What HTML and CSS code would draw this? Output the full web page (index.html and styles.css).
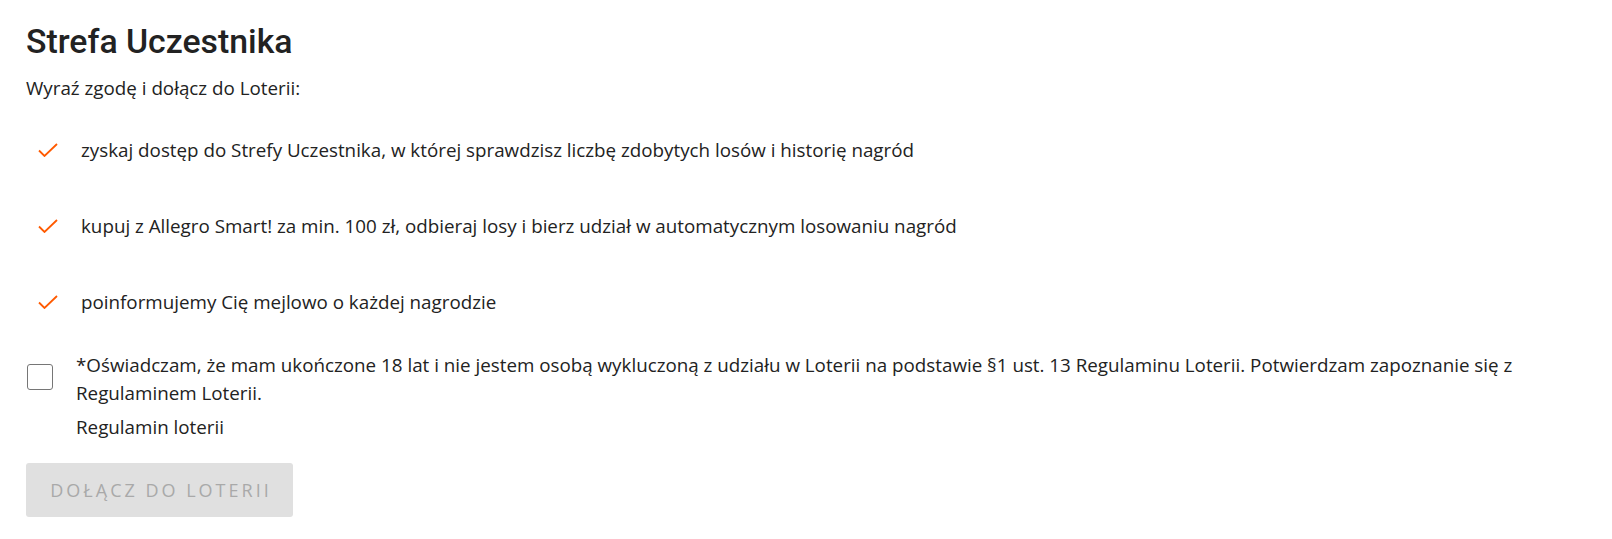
FILE: index.html
```html
<!DOCTYPE html>
<html lang="pl">
<head>
<meta charset="utf-8">
<title>Strefa Uczestnika</title>
<link rel="stylesheet" href="styles.css">
</head>
<body>
<main class="panel">
  <h1 class="title">Strefa Uczestnika</h1>
  <p class="intro">Wyraź zgodę i dołącz do Loterii:</p>
  <ul class="benefits">
    <li class="benefit">
      <svg class="check" width="20" height="14" viewBox="0 0 20 14"><path d="M1 7.5 L6.5 13 L19 1" fill="none" stroke="#ff5a00" stroke-width="1.8"/></svg>
      <span>zyskaj dostęp do Strefy Uczestnika, w której sprawdzisz liczbę zdobytych losów i historię nagród</span>
    </li>
    <li class="benefit">
      <svg class="check" width="20" height="14" viewBox="0 0 20 14"><path d="M1 7.5 L6.5 13 L19 1" fill="none" stroke="#ff5a00" stroke-width="1.8"/></svg>
      <span>kupuj z Allegro Smart! za min. 100 zł, odbieraj losy i bierz udział w automatycznym losowaniu nagród</span>
    </li>
    <li class="benefit">
      <svg class="check" width="20" height="14" viewBox="0 0 20 14"><path d="M1 7.5 L6.5 13 L19 1" fill="none" stroke="#ff5a00" stroke-width="1.8"/></svg>
      <span>poinformujemy Cię mejlowo o każdej nagrodzie</span>
    </li>
  </ul>
  <div class="consent">
    <span class="box"></span>
    <div class="consent-body">
      <p class="consent-text">*Oświadczam, że mam ukończone 18 lat i nie jestem osobą wykluczoną z udziału w Loterii na podstawie §1 ust. 13 Regulaminu Loterii. Potwierdzam zapoznanie się z Regulaminem Loterii.</p>
      <a class="rules" href="#">Regulamin loterii</a>
    </div>
  </div>
  <button class="join" disabled>DOŁĄCZ DO LOTERII</button>
</main>
</body>
</html>
```
FILE: styles.css
```css
html, body {
  margin: 0;
  padding: 0;
  background: #fff;
}
body {
  font-family: "Open Sans", "Liberation Sans", sans-serif;
  font-size: 18.8px;
  color: #222;
}
.panel {
  padding: 22px 26px 0 26px;
}
.title {
  margin: 0;
  font-family: Roboto, "Liberation Sans", sans-serif;
  font-weight: 500;
  font-size: 33.8px;
  line-height: 40px;
  color: #222;
}
.intro {
  margin: 13px 0 0 0;
  line-height: 26px;
}
.benefits {
  list-style: none;
  margin: 36px 0 0 0;
  padding: 0;
  display: flex;
  flex-direction: column;
  gap: 50px;
}
.benefit {
  display: flex;
  align-items: center;
  line-height: 26px;
}
.check {
  margin-left: 12px;
  margin-right: 23px;
  flex: none;
}
.consent {
  display: flex;
  align-items: flex-start;
  margin-top: 36px;
}
.box {
  flex: none;
  width: 24px;
  height: 24px;
  border: 1px solid #767676;
  border-radius: 3px;
  margin-top: 13px;
  margin-left: 1px;
  margin-right: 23px;
}
.consent-body {
  flex: 1;
}
.consent-text {
  margin: 0;
  line-height: 28px;
}
.rules {
  display: block;
  margin-top: 7px;
  line-height: 26px;
  color: #222;
  text-decoration: none;
}
.join {
  margin-top: 23px;
  width: 267px;
  height: 54px;
  border: none;
  border-radius: 3px;
  background: #e0e0e0;
  color: #a9a9a9;
  font-family: "Open Sans", "Liberation Sans", sans-serif;
  font-size: 18px;
  letter-spacing: 3px;
  padding: 0 0 0 3px;
  text-align: center;
}
```
